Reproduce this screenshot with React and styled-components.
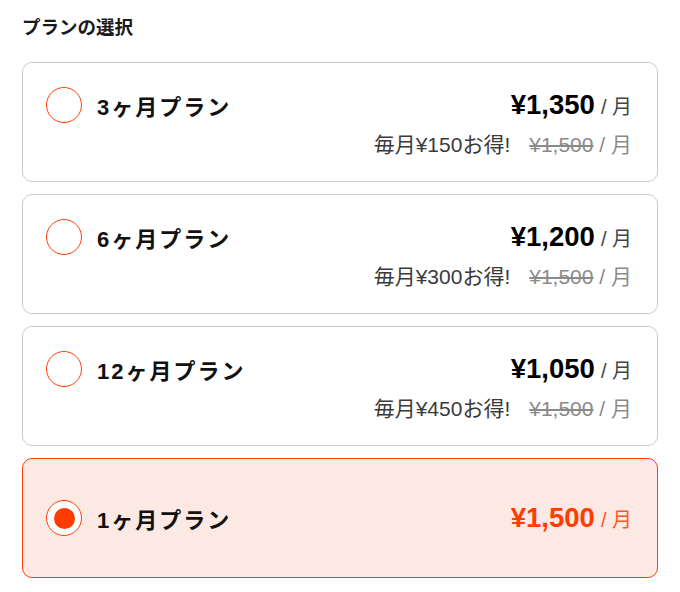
import React, { useState } from 'react';
import styled, { createGlobalStyle, css } from 'styled-components';

const GlobalStyle = createGlobalStyle`
  body {
    margin: 0;
    background: #fff;
    font-family: "Liberation Sans", "Noto Sans CJK JP", sans-serif;
    color: #111;
  }
`;

const accent = '#ff3d00';

const Page = styled.div`
  padding: 16px 22px 0 22px;
`;

const Title = styled.h2`
  margin: 0 0 22px 0;
  font-size: 18.5px;
  line-height: 24px;
  font-weight: 700;
  color: #1a1a1a;
`;

const List = styled.div`
  display: flex;
  flex-direction: column;
  gap: 12px;
`;

const Card = styled.label`
  box-sizing: border-box;
  min-height: 120px;
  display: flex;
  flex-direction: column;
  justify-content: center;
  gap: 10px;
  padding: 0 25px 0 23px;
  border: 1px solid #cccccc;
  border-radius: 10px;
  background: #fff;
  cursor: pointer;

  ${p => p.$active && css`
    border-color: ${accent};
    background: #fde9e4;
  `}
`;

const MainRow = styled.div`
  display: flex;
  align-items: center;
  gap: 15px;
`;

const Radio = styled.span`
  box-sizing: border-box;
  width: 36px;
  height: 36px;
  flex: none;
  border: 1.6px solid ${accent};
  border-radius: 50%;
  display: flex;
  align-items: center;
  justify-content: center;
  background: #fff;

  &::after {
    content: '';
    width: 21px;
    height: 21px;
    border-radius: 50%;
    background: ${accent};
    display: ${p => (p.$checked ? 'block' : 'none')};
  }
`;

const Name = styled.span`
  font-size: 22px;
  font-weight: 700;
  letter-spacing: 2px;
  flex: 1;
`;

const Price = styled.span`
  font-size: 27.5px;
  font-weight: 700;
  color: ${p => (p.$active ? accent : '#000')};
`;

const Per = styled.span`
  font-size: 20px;
  margin-left: 6px;
  color: ${p => (p.$active ? accent : '#444')};
  opacity: ${p => (p.$active ? 0.85 : 1)};
`;

const SubRow = styled.div`
  display: flex;
  justify-content: flex-end;
  align-items: baseline;
  gap: 19px;
  font-size: 21px;
  line-height: 24px;
`;

const Saving = styled.span`
  color: #3a3a3a;
`;

const OldPrice = styled.span`
  color: #8a8a8a;

  s {
    text-decoration-thickness: 1.5px;
  }
`;

const plans = [
  { id: 3, name: '3ヶ月プラン', price: '¥1,350', saving: '毎月¥150お得!' },
  { id: 6, name: '6ヶ月プラン', price: '¥1,200', saving: '毎月¥300お得!' },
  { id: 12, name: '12ヶ月プラン', price: '¥1,050', saving: '毎月¥450お得!' },
  { id: 1, name: '1ヶ月プラン', price: '¥1,500' },
];

export default function App() {
  const [selected, setSelected] = useState(1);

  return (
    <Page>
      <GlobalStyle />
      <Title>プランの選択</Title>
      <List>
        {plans.map(plan => {
          const active = plan.id === selected;
          return (
            <Card key={plan.id} $active={active} onClick={() => setSelected(plan.id)}>
              <MainRow>
                <Radio $checked={active} />
                <Name>{plan.name}</Name>
                <span>
                  <Price $active={active}>{plan.price}</Price>
                  <Per $active={active}>/ 月</Per>
                </span>
              </MainRow>
              {plan.saving && (
                <SubRow>
                  <Saving>{plan.saving}</Saving>
                  <OldPrice><s>¥1,500</s> / 月</OldPrice>
                </SubRow>
              )}
            </Card>
          );
        })}
      </List>
    </Page>
  );
}
